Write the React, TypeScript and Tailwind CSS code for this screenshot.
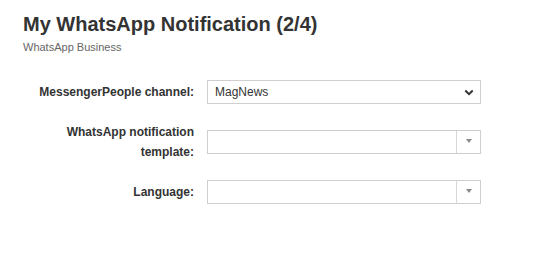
import React from "react";

function Chevron() {
  return (
    <svg width="10" height="7" viewBox="0 0 10 7" className="shrink-0">
      <path d="M1.3 1.5 L5 5.1 L8.7 1.5" fill="none" stroke="#333" strokeWidth="2" strokeLinecap="butt" strokeLinejoin="miter" />
    </svg>
  );
}

function Tri() {
  return (
    <svg width="6" height="4" viewBox="0 0 6 4">
      <path d="M0 0 L6 0 L3 4 Z" fill="#8a8a8a" />
    </svg>
  );
}

function Row({ label, children }: { label: React.ReactNode; children: React.ReactNode }) {
  return (
    <div className="flex items-center">
      <div className="w-[171px] shrink-0 text-right text-[12px] leading-[20px] font-bold text-[#333]">{label}</div>
      <div className="ml-[13px]">{children}</div>
    </div>
  );
}

function NativeSelect({ value }: { value: string }) {
  return (
    <div className="w-[274px] h-[24px] border border-[#cfcfcf] bg-white flex items-center pl-[7px] pr-[6px]">
      <span className="flex-1 text-[12px] text-[#333] leading-none">{value}</span>
      <Chevron />
    </div>
  );
}

function ComboSelect() {
  return (
    <div className="w-[274px] h-[24px] border border-[#cfcfcf] bg-white flex">
      <div className="flex-1" />
      <div className="w-[24px] border-l border-[#d6d6d6] flex items-center justify-center pb-[3px]">
        <Tri />
      </div>
    </div>
  );
}

export default function App() {
  return (
    <div className="w-[545px] h-[263px] bg-white pl-[23px] pt-[12px]" style={{ fontFamily: '"Liberation Sans", Arial, sans-serif' }}>
      <h1 className="text-[20px] leading-[24px] font-bold text-[#333]">My WhatsApp Notification (2/4)</h1>
      <div className="mt-[3px] text-[11px] leading-[16px] text-[#666]">WhatsApp Business</div>
      <div className="mt-[25px] flex flex-col gap-[18px]">
        <Row label="MessengerPeople channel:">
          <NativeSelect value="MagNews" />
        </Row>
        <Row label="WhatsApp notification template:">
          <ComboSelect />
        </Row>
        <Row label="Language:">
          <ComboSelect />
        </Row>
      </div>
    </div>
  );
}
